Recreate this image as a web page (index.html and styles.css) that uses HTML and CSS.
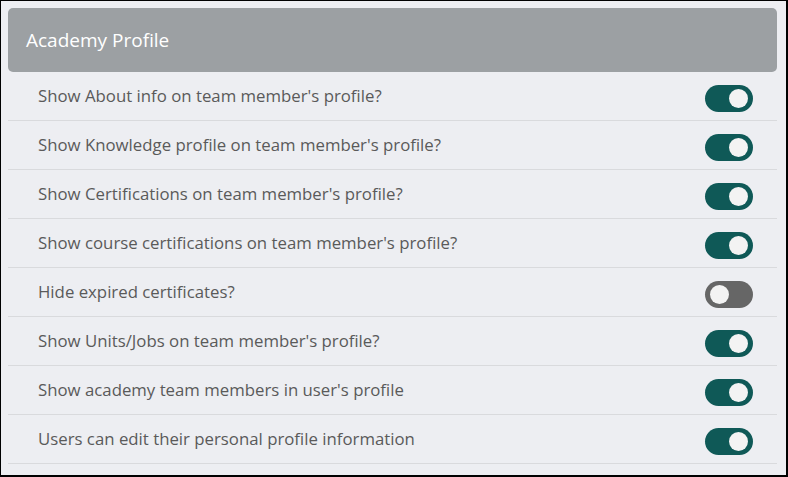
FILE: index.html
```html
<!DOCTYPE html>
<html lang="en">
<head>
  <meta charset="UTF-8" />
  <title>Academy Profile</title>
  <link rel="stylesheet" href="styles.css">
</head>
<body>
  <div class="panel">
    <div class="panel-header">Academy Profile</div>
    <div class="setting">
      <span class="label">Show About info on team member's profile?</span>
      <span class="switch on"><span class="knob"></span></span>
    </div>
    <div class="setting">
      <span class="label">Show Knowledge profile on team member's profile?</span>
      <span class="switch on"><span class="knob"></span></span>
    </div>
    <div class="setting">
      <span class="label">Show Certifications on team member's profile?</span>
      <span class="switch on"><span class="knob"></span></span>
    </div>
    <div class="setting">
      <span class="label">Show course certifications on team member's profile?</span>
      <span class="switch on"><span class="knob"></span></span>
    </div>
    <div class="setting">
      <span class="label">Hide expired certificates?</span>
      <span class="switch"><span class="knob"></span></span>
    </div>
    <div class="setting">
      <span class="label">Show Units/Jobs on team member's profile?</span>
      <span class="switch on"><span class="knob"></span></span>
    </div>
    <div class="setting">
      <span class="label">Show academy team members in user's profile</span>
      <span class="switch on"><span class="knob"></span></span>
    </div>
    <div class="setting">
      <span class="label">Users can edit their personal profile information</span>
      <span class="switch on"><span class="knob"></span></span>
    </div>
  </div>
</body>
</html>
```

FILE: styles.css
```css
html, body {
  margin: 0;
  height: 100%;
}
body {
  box-sizing: border-box;
  background-color: #edeef2;
  border: 1px solid #000;
  border-right-width: 2px;
  border-bottom-width: 2px;
  font-family: 'Open Sans', sans-serif;
  padding: 7px 9px 0 7px;
}
.panel {
  display: flex;
  flex-direction: column;
}
.panel-header {
  background-color: #9ca0a3;
  color: #fff;
  border-radius: 5px;
  height: 64px;
  display: flex;
  align-items: center;
  padding-left: 18px;
  font-size: 19px;
}
.setting {
  height: 48px;
  border-bottom: 1px solid #d9dadd;
  display: flex;
  align-items: center;
  justify-content: space-between;
  padding: 0 24px 0 30px;
}
.label {
  color: #5a5a5a;
  font-size: 16.8px;
  margin-top: -1px;
}
.switch {
  width: 48px;
  height: 27px;
  border-radius: 14px;
  background-color: #666;
  display: flex;
  align-items: center;
  padding: 0 5px;
  box-sizing: border-box;
  margin-top: 4px;
}
.switch.on {
  background-color: #0f5957;
  justify-content: flex-end;
}
.knob {
  width: 19px;
  height: 19px;
  border-radius: 50%;
  background-color: #f3f3f3;
}
```
